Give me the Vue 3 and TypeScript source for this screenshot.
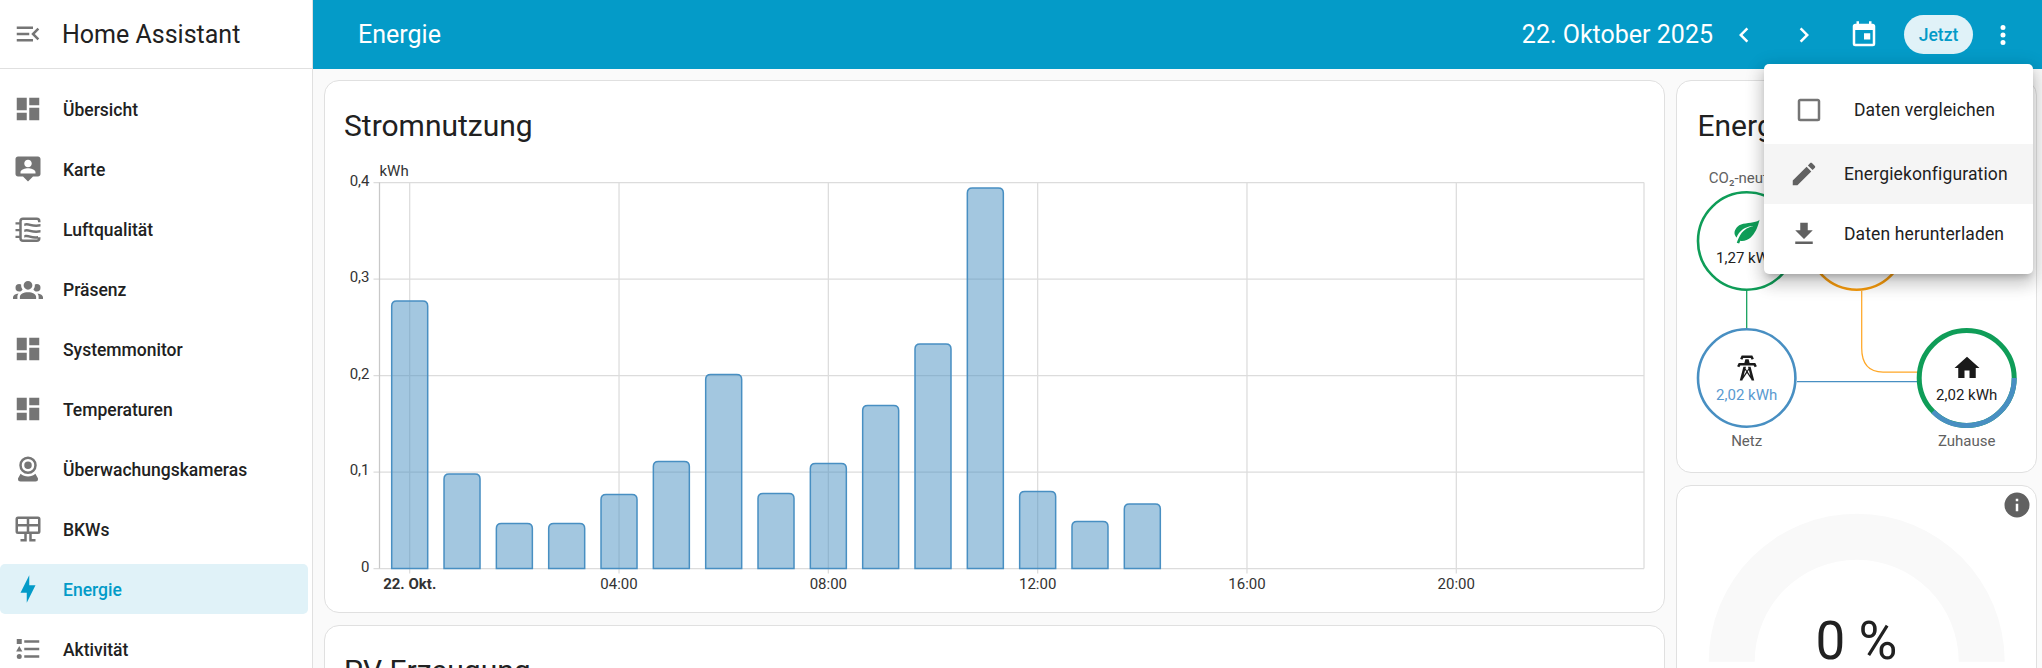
<script setup lang="ts">
interface NavItem { label: string; icon: string; active?: boolean }

const P = {
  dash: 'M13,3V9H21V3M13,21H21V11H13M3,21H11V15H3M3,13H11V3H3V13Z',
  map: 'M20 2H4C2.9 2 2 2.9 2 4V16C2 17.1 2.9 18 4 18H8L12 22L16 18H20C21.1 18 22 17.1 22 16V4C22 2.9 21.1 2 20 2M12 4.5C13.66 4.5 15 5.84 15 7.5S13.66 10.5 12 10.5 9 9.16 9 7.5 10.34 4.5 12 4.5M18 15.5H6V14.5C6 12.5 10 11.4 12 11.4S18 12.5 18 14.5V15.5Z',
  group: 'M12,5.5A3.5,3.5 0 0,1 15.5,9A3.5,3.5 0 0,1 12,12.5A3.5,3.5 0 0,1 8.5,9A3.5,3.5 0 0,1 12,5.5M5,8C5.56,8 6.08,8.15 6.53,8.42C6.38,9.85 6.8,11.27 7.66,12.38C7.16,13.34 6.16,14 5,14A3,3 0 0,1 2,11A3,3 0 0,1 5,8M19,8A3,3 0 0,1 22,11A3,3 0 0,1 19,14C17.84,14 16.84,13.34 16.34,12.38C17.2,11.27 17.62,9.85 17.47,8.42C17.92,8.15 18.44,8 19,8M5.5,18.25C5.5,16.18 8.41,14.5 12,14.5C15.59,14.5 18.5,16.18 18.5,18.25V20H5.5V18.25M0,20V18.5C0,17.11 1.89,15.94 4.45,15.6C3.86,16.28 3.5,17.22 3.5,18.25V20H0M24,20H20.5V18.25C20.5,17.22 20.14,16.28 19.55,15.6C22.11,15.94 24,17.11 24,18.5V20Z',
  webcam: 'M12,2A7,7 0 0,1 19,9A7,7 0 0,1 12,16A7,7 0 0,1 5,9A7,7 0 0,1 12,2M12,4A5,5 0 0,0 7,9A5,5 0 0,0 12,14A5,5 0 0,0 17,9A5,5 0 0,0 12,4M12,6A3,3 0 0,1 15,9A3,3 0 0,1 12,12A3,3 0 0,1 9,9A3,3 0 0,1 12,6M6,22A2,2 0 0,1 4,20C4,19.62 4.1,19.27 4.29,18.97L6.11,15.81C7.69,17.17 9.75,18 12,18C14.25,18 16.31,17.17 17.89,15.81L19.71,18.97C19.9,19.27 20,19.62 20,20A2,2 0 0,1 18,22H6Z',
  solar: 'M4,2H20A2,2 0 0,1 22,4V14A2,2 0 0,1 20,16H15V20H18V22H13V16H11V22H6V20H9V16H4A2,2 0 0,1 2,14V4A2,2 0 0,1 4,2M4,4V8H11V4H4M4,14H11V10H4V14M20,14V10H13V14H20M20,4H13V8H20V4Z',
  bolt: 'M11 15H6L13 1V9H18L11 23V15Z',
  list: 'M5,9.5L7.5,14H2.5L5,9.5M3,4H7V8H3V4M5,20A2,2 0 0,0 7,18A2,2 0 0,0 5,16A2,2 0 0,0 3,18A2,2 0 0,0 5,20M9,5V7H21V5H9M9,19H21V17H9V19M9,13H21V11H9V13Z',
  air: 'M8 2.7H19A3 3 0 0 1 22 5.7V6.5H20V5.7A1 1 0 0 0 19 4.7H8A1 1 0 0 0 7 5.7V19.4A1 1 0 0 0 8 20.4H19A1 1 0 0 0 20 19.4V18.5H22V19.4A3 3 0 0 1 19 22.4H8A3 3 0 0 1 5 19.4V5.7A3 3 0 0 1 8 2.7ZM2 6.5H6V8.3H2ZM2 12H6V13.8H2ZM2 17.3H6V19.1H2ZM9 7.6C12 6 15 9.4 22 8V10C15 11.4 12 8 9 9.6ZM9 12.4C12 10.8 15 14.2 22 12.8V14.8C15 16.2 12 12.8 9 14.4ZM9 17C12 15.4 15 18.8 20 17.6V19.6C15 20.8 12 17.4 9 19Z',
}

const navItems: NavItem[] = [
  { label: 'Übersicht', icon: P.dash },
  { label: 'Karte', icon: P.map },
  { label: 'Luftqualität', icon: P.air },
  { label: 'Präsenz', icon: P.group },
  { label: 'Systemmonitor', icon: P.dash },
  { label: 'Temperaturen', icon: P.dash },
  { label: 'Überwachungskameras', icon: P.webcam },
  { label: 'BKWs', icon: P.solar },
  { label: 'Energie', icon: P.bolt, active: true },
  { label: 'Aktivität', icon: P.list },
]

/* chart coordinates are page pixels; the svg's viewBox maps them into the card */
const axisX = 379
const rightX = 1643.5
const topY = 182.5
const baseY = 568.5
const yStep = (baseY - topY) / 4
const hour = 52.33
const hour0 = 409.2

const yTicks = ['0,4', '0,3', '0,2', '0,1', '0'].map((label, i) => ({
  label,
  y: topY + yStep * i,
}))
const xTicks = [
  { label: '22. Okt.', h: 0, bold: true },
  { label: '04:00', h: 4 },
  { label: '08:00', h: 8 },
  { label: '12:00', h: 12 },
  { label: '16:00', h: 16 },
  { label: '20:00', h: 20 },
].map((t) => ({ ...t, x: hour0 + t.h * hour }))

const tops = [301, 474, 523.5, 523.5, 494.5, 461.5, 374.5, 493.5, 463.5, 405.5, 344, 188, 491.5, 521.5, 504]
const barW = 36
const barPaths = tops.map((t, i) => {
  const l = hour0 + i * hour - barW / 2
  const r = l + barW
  const c = 5
  return `M${l} ${baseY}V${t + c}Q${l} ${t} ${l + c} ${t}H${r - c}Q${r} ${t} ${r} ${t + c}V${baseY}Z`
})

const ringCirc = 2 * Math.PI * 47.5
const blueLen = ringCirc * 0.375
</script>

<template>
  <div class="app">
    <aside class="sidebar">
      <div class="brand">
        <svg class="icon" viewBox="0 0 24 24"><path d="M21,15.61L19.59,17L14.58,12L19.59,7L21,8.39L17.44,12L21,15.61M3,6H16V8H3V6M3,13V11H13V13H3M3,18V16H16V18H3Z" /></svg>
        <span class="brand-name">Home Assistant</span>
      </div>
      <nav class="nav">
        <a v-for="item in navItems" :key="item.label" class="nav-item" :class="{ active: item.active }">
          <svg class="icon" viewBox="0 0 24 24"><path :d="item.icon" /></svg>
          <span class="nav-label">{{ item.label }}</span>
        </a>
      </nav>
    </aside>

    <div class="page">
      <header class="topbar">
        <h1 class="top-title">Energie</h1>
        <div class="top-date">22. Oktober 2025</div>
        <button class="icon-btn first"><svg viewBox="0 0 24 24"><path d="M15.41,16.58L10.83,12L15.41,7.41L14,6L8,12L14,18L15.41,16.58Z" /></svg></button>
        <button class="icon-btn"><svg viewBox="0 0 24 24"><path d="M8.59,16.58L13.17,12L8.59,7.41L10,6L16,12L10,18L8.59,16.58Z" /></svg></button>
        <button class="icon-btn"><svg viewBox="0 0 24 24"><path d="M19,3H18V1H16V3H8V1H6V3H5C3.89,3 3,3.89 3,5V19A2,2 0 0,0 5,21H19A2,2 0 0,0 21,19V5C21,3.89 20.1,3 19,3M19,19H5V8H19V19M12,10.5H17V15.5H12V10.5Z" /></svg></button>
        <button class="now-btn">Jetzt</button>
        <button class="icon-btn dots"><svg viewBox="0 0 24 24"><path d="M12,16A2,2 0 0,1 14,18A2,2 0 0,1 12,20A2,2 0 0,1 10,18A2,2 0 0,1 12,16M12,10A2,2 0 0,1 14,12A2,2 0 0,1 12,14A2,2 0 0,1 10,12A2,2 0 0,1 12,10M12,4A2,2 0 0,1 14,6A2,2 0 0,1 12,8A2,2 0 0,1 10,6A2,2 0 0,1 12,4Z" /></svg></button>
      </header>

      <main class="content">
        <div class="col-left">
          <section class="card chart-card">
            <h2 class="card-title">Stromnutzung</h2>
            <svg class="chart" viewBox="324.5 150 1340 462" width="1340" height="462">
              <g class="grid">
                <line v-for="t in yTicks" :key="t.label" :x1="axisX - 6" :x2="rightX" :y1="t.y" :y2="t.y" />
                <line v-for="t in xTicks" :key="t.label" :x1="t.x" :x2="t.x" :y1="topY" :y2="baseY + 5" />
                <line :x1="rightX" :x2="rightX" :y1="topY" :y2="baseY" />
              </g>
              <line class="axis" :x1="axisX" :x2="axisX" :y1="topY" :y2="baseY" />
              <path v-for="(d, i) in barPaths" :key="i" class="bar" :d="d" />
              <text class="tick" :x="axisX" y="176">kWh</text>
              <text v-for="t in yTicks" :key="t.label" class="tick" text-anchor="end" :x="axisX - 10" :y="t.y + 3.2">{{ t.label }}</text>
              <text v-for="t in xTicks" :key="t.label" class="tick" :class="{ bold: t.bold }" text-anchor="middle" :x="t.x" y="589">{{ t.label }}</text>
            </svg>
          </section>
          <section class="card">
            <h2 class="card-title">PV Erzeugung</h2>
            <div class="card-rest"></div>
          </section>
        </div>

        <div class="col-right">
          <section class="card flow-card">
            <h2 class="card-title">Energieverteilung</h2>
            <div class="flow">
              <svg class="flow-lines" viewBox="0 0 359 322" width="359" height="322">
                <path class="ln green" d="M69.7 141V178" />
                <path class="ln orange" d="M184.7 141V198C184.7 215 192 222 206 222H241" />
                <path class="ln blue" d="M120 231.5H241" />
                <circle class="ring green" cx="69.7" cy="91" r="48.7" />
                <circle class="ring orange" cx="179.7" cy="91" r="48.7" />
                <circle class="ring blue" cx="69.7" cy="228" r="48.7" />
                <circle class="ring-thick green" cx="289.7" cy="228" r="47.5" />
                <circle class="ring-thick blue" cx="289.7" cy="228" r="47.5" :stroke-dasharray="`${blueLen} ${ringCirc}`" />
              </svg>

              <div class="flow-label co2">CO₂-neutral</div>
              <div class="node n-co2">
                <svg class="node-icon leaf" viewBox="0 0 24 24"><path d="M17,8C8,10 5.9,16.17 3.82,21.34L5.71,22L6.66,19.7C7.14,19.87 7.64,20 8,20C19,20 22,3 22,3C21,5 14,5.25 9,6.25C4,7.25 2,11.5 2,13.5C2,15.5 3.75,17.25 3.75,17.25C7,8 17,8 17,8Z" /></svg>
                <span class="node-val">1,27 kWh</span>
              </div>
              <div class="node n-grid">
                <svg class="node-icon" viewBox="0 0 24 24"><path d="M8.28,5.45L6.5,4.55L7.76,2H16.23L17.5,4.55L15.72,5.44L15,4H9L8.28,5.45M18.62,8H14.09L13.3,5H10.7L9.91,8H5.38L4.1,10.55L5.89,11.44L6.62,10H17.38L18.1,11.45L19.89,10.56L18.62,8M17.77,22H15.7L15.46,21.1L12,15.9L8.53,21.1L8.3,22H6.23L9.12,11H11.19L10.83,12.35L12,14.1L13.17,12.35L12.81,11H14.88L17.77,22M11.4,15L10.5,13.65L9.32,18.13L11.4,15M14.68,18.12L13.5,13.64L12.6,15L14.68,18.12Z" /></svg>
                <span class="node-val grid-val">2,02 kWh</span>
              </div>
              <div class="node n-home">
                <svg class="node-icon" viewBox="0 0 24 24"><path d="M10,20V14H14V20H19V12H22L12,3L2,12H5V20H10Z" /></svg>
                <span class="node-val">2,02 kWh</span>
              </div>
              <div class="flow-label l-grid">Netz</div>
              <div class="flow-label l-home">Zuhause</div>
            </div>
          </section>

          <section class="card gauge-card">
            <svg class="info" viewBox="0 0 24 24"><path d="M13,9H11V7H13M13,17H11V11H13M12,2A10,10 0 0,0 2,12A10,10 0 0,0 12,22A10,10 0 0,0 22,12A10,10 0 0,0 12,2Z" /></svg>
            <div class="gauge">
              <svg viewBox="0 0 359 176" width="359" height="176"><path d="M31.7 175.7A148 148 0 0 1 327.7 175.7H281.7A102 102 0 0 0 77.7 175.7Z" /></svg>
              <div class="gauge-value">0 %</div>
            </div>
          </section>
        </div>
      </main>
    </div>

    <div class="menu">
      <div class="menu-item check">
        <svg class="menu-icon box" viewBox="0 0 24 24"><path d="M19,3H5C3.89,3 3,3.89 3,5V19A2,2 0 0,0 5,21H19A2,2 0 0,0 21,19V5C21,3.89 20.1,3 19,3M19,5V19H5V5H19Z" /></svg>
        <span>Daten vergleichen</span>
      </div>
      <div class="menu-item hover">
        <svg class="menu-icon" viewBox="0 0 24 24"><path d="M20.71,7.04C21.1,6.65 21.1,6 20.71,5.63L18.37,3.29C18,2.9 17.35,2.9 16.96,3.29L15.12,5.12L18.87,8.87M3,17.25V21H6.75L17.81,9.93L14.06,6.18L3,17.25Z" /></svg>
        <span>Energiekonfiguration</span>
      </div>
      <div class="menu-item">
        <svg class="menu-icon" viewBox="0 0 24 24"><path d="M5,20H19V18H5M19,9H15V3H9V9H5L12,16L19,9Z" /></svg>
        <span>Daten herunterladen</span>
      </div>
    </div>
  </div>
</template>

<style>
html, body { margin: 0; overflow: hidden; background: #fafafa; }
</style>

<style scoped>
* { box-sizing: border-box; }
.app {
  position: relative;
  display: flex;
  width: 2042px;
  height: 668px;
  overflow: hidden;
  font-family: Roboto, "Liberation Sans", sans-serif;
  color: #212121;
  background: #fafafa;
}
.icon { width: 30px; height: 30px; flex: none; fill: #757575; }

.sidebar {
  width: 313px;
  flex: none;
  background: #fff;
  border-right: 1px solid #e0e0e0;
}
.brand {
  display: flex;
  align-items: center;
  gap: 19px;
  height: 69px;
  padding-left: 13px;
  border-bottom: 1px solid #e0e0e0;
}
.brand-name { font-size: 25px; font-weight: 400; color: #212121; }
.nav { padding-top: 15px; }
.nav-item {
  display: flex;
  align-items: center;
  gap: 20px;
  width: 308px;
  height: 50px;
  margin-bottom: 10px;
  padding-left: 13px;
  border-radius: 5px;
  font-size: 17.5px;
  font-weight: 500;
  color: #212121;
}
.nav-label { padding-top: 1.5px; }
.nav-item.active { background: #e0f2f8; color: #039bc8; }
.nav-item.active .icon { fill: #039bc8; }

.page { flex: 1; min-width: 0; display: flex; flex-direction: column; }
.topbar {
  display: flex;
  align-items: center;
  flex: none;
  height: 69px;
  padding-left: 45px;
  background: #049bc8;
  color: #fff;
}
.top-title { margin: 0; flex: 1; font-size: 25px; font-weight: 400; }
.top-date { font-size: 25px; }
.icon-btn {
  display: flex;
  width: 60px;
  height: 60px;
  padding: 15px;
  border: 0;
  background: none;
  flex: none;
}
.icon-btn svg { width: 30px; height: 30px; fill: #fff; }
.icon-btn.first { margin-left: 1px; }
.icon-btn.dots { margin-right: 9px; }
.now-btn {
  width: 69px;
  height: 39px;
  margin-left: 10px;
  border: 0;
  border-radius: 20px;
  background: #e0f2f8;
  color: #039bc8;
  font: 500 17.5px Roboto, sans-serif;
  padding: 0;
}

.content {
  flex: 1;
  min-height: 0;
  display: flex;
  gap: 11px;
  padding: 11px 5px 0 10.5px;
  overflow: hidden;
}
.col-left { flex: 1; min-width: 0; display: flex; flex-direction: column; gap: 12px; }
.col-right { width: 361px; flex: none; display: flex; flex-direction: column; gap: 12px; }
.card {
  flex: none;
  background: #fff;
  border: 1px solid #e0e0e0;
  border-radius: 15px;
}
.card-title {
  margin: 0;
  height: 69px;
  padding: 25px 20px 0 19.5px;
  font-size: 30px;
  line-height: 40px;
  font-weight: 400;
  color: #212121;
  white-space: nowrap;
}
.chart-card { height: 533px; }
.chart { display: block; }
.card-rest { height: 200px; }
.grid line { stroke: #dcdcdc; stroke-width: 1.25; }
.axis { stroke: #c8c8c8; stroke-width: 1.25; }
.bar { fill: rgba(72, 143, 194, 0.5); stroke: #488fc2; stroke-width: 1.5; }
.tick { font-size: 15px; fill: #333; font-family: Roboto, sans-serif; }
.tick.bold { font-weight: 700; }

.flow-card { height: 393px; }
.flow-card .card-title { padding-left: 20.5px; }
.flow { position: relative; height: 322px; }
.flow-lines { position: absolute; left: 0; top: 0; }
.ln { fill: none; stroke-width: 1.25; }
.ln.green { stroke: #0f9d58; }
.ln.orange { stroke: #ffa726; }
.ln.blue { stroke: #488fc2; }
.ring { fill: #fff; stroke-width: 2.6; }
.ring.green { stroke: #0f9d58; }
.ring.orange { stroke: #f59a0c; }
.ring.blue { stroke: #488fc2; }
.ring-thick { fill: none; stroke-width: 5; }
.ring-thick.green { stroke: #0f9d58; }
.ring-thick.blue { stroke: #488fc2; }

.node {
  position: absolute;
  width: 100px;
  height: 100px;
  padding-top: 3px;
  display: flex;
  flex-direction: column;
  align-items: center;
  justify-content: center;
  font-size: 15px;
  line-height: 22px;
  color: #212121;
  white-space: nowrap;
}
.node-val { margin-top: 1.8px; }
.node-icon { width: 30px; height: 30px; fill: #1a1a1a; }
.leaf { fill: #0f9d58; }
.grid-val { color: #5a9ad0; }
.n-co2 { left: 19.7px; top: 41px; }
.n-grid { left: 19.7px; top: 178px; }
.n-home { left: 239.7px; top: 178px; }
.flow-label {
  position: absolute;
  width: 100px;
  text-align: center;
  font-size: 15px;
  line-height: 20px;
  color: #616161;
}
.co2 { left: 19.7px; top: 18px; }
.l-grid { left: 19.7px; top: 281px; }
.l-home { left: 239.7px; top: 281px; }

.gauge-card { position: relative; height: 300px; }
.info {
  position: absolute;
  top: 4px;
  right: 4.5px;
  width: 30px;
  height: 30px;
  fill: #616161;
}
.gauge { position: relative; height: 176px; }
.gauge svg { display: block; }
.gauge svg path { fill: #f9f9f9; }
.gauge-value {
  position: absolute;
  left: 0;
  right: 0;
  top: 130px;
  text-align: center;
  font-size: 53px;
  line-height: 50px;
  color: #212121;
}

.menu {
  position: absolute;
  left: 1764px;
  top: 64px;
  width: 269px;
  height: 210px;
  padding: 10px 0;
  background: #fff;
  border-radius: 5px;
  box-shadow: 0 5px 6px -3px rgba(0,0,0,.2), 0 10px 17px 1px rgba(0,0,0,.14), 0 4px 18px 3px rgba(0,0,0,.12);
  font-size: 17.5px;
  letter-spacing: 0.13px;
  color: #212121;
}
.menu-item {
  display: flex;
  align-items: center;
  height: 60px;
  padding-left: 25px;
  gap: 25px;
  white-space: nowrap;
}
.menu-item.check { height: 70px; padding: 1px 0 0 30px; gap: 30px; }
.menu-item.hover { background: #f5f5f5; }
.menu-icon { width: 30px; height: 30px; flex: none; fill: #616161; }
.menu-icon.box { fill: #757575; }
</style>
